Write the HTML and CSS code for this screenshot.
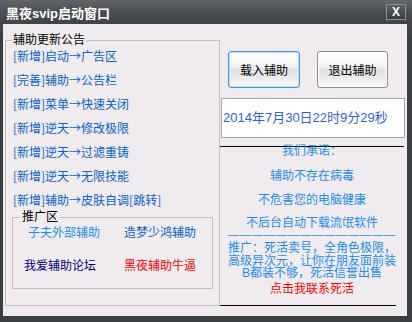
FILE: index.html
```html
<!DOCTYPE html>
<html lang="zh-CN">
<head>
  <meta charset="UTF-8" />
  <title>黑夜svip启动窗口</title>
  <link rel="stylesheet" href="styles.css">
</head>
<body>

  <div class="window">
    <div class="titlebar">
      <span class="title">黑夜svip启动窗口</span>
      <span class="close">X</span>
    </div>

    <div class="content">
      <fieldset class="notice">
        <legend>辅助更新公告</legend>
        <ul class="news">
          <li>[新增]启动→广告区</li>
          <li>[完善]辅助→公告栏</li>
          <li>[新增]菜单→快速关闭</li>
          <li>[新增]逆天→修改极限</li>
          <li>[新增]逆天→过滤重铸</li>
          <li>[新增]逆天→无限技能</li>
          <li>[新增]辅助→皮肤自调[跳转]</li>
        </ul>

        <fieldset class="promo">
          <legend>推广区</legend>
          <div class="links">
            <span class="link light first">子夫外部辅助</span>
            <span class="link">造梦少鸿辅助</span>
            <span class="link navy">我爱辅助论坛</span>
            <span class="link red">黑夜辅助牛逼</span>
          </div>
        </fieldset>
      </fieldset>

      <div class="side">
        <div class="buttons">
          <button class="btn focus">载入辅助</button>
          <button class="btn exit">退出辅助</button>
        </div>

        <div class="clock">2014年7月30日22时9分29秒</div>

        <div class="pledge">
          <p class="head">我们承诺：</p>
          <p class="item">辅助不存在病毒</p>
          <p class="item">不危害您的电脑健康</p>
          <p class="item">不后台自动下载流氓软件</p>
          <p class="dashes">——————————————</p>
          <p class="ad">推广：死活卖号，全角色极限，<br>高级异次元，让你在朋友面前装<br>B都装不够，死活信誉出售</p>
          <p class="contact">点击我联系死活</p>
          <div class="endline"></div>
        </div>
      </div>
    </div>
  </div>

</body>
</html>
```

FILE: styles.css
```css
body {
  margin: 0;
  font-family: "Liberation Sans", "Noto Sans CJK SC", sans-serif;
  font-size: 12px;
}

.window {
  width: 412px;
  height: 322px;
  background: linear-gradient(#55595d, #3a3e42 40px, #3a3e42);
  box-sizing: border-box;
  overflow: hidden;
}

.titlebar {
  height: 24px;
  display: flex;
  align-items: center;
  justify-content: space-between;
  background: linear-gradient(#62666a, #4a4e52 50%, #3f4347);
}

.title {
  padding-left: 6px;
  color: #fff;
  font-weight: bold;
  font-size: 13px;
}

.close {
  width: 18px;
  height: 14px;
  margin-right: 6px;
  border: 1px solid #8e9296;
  background: linear-gradient(#5c6064, #383c40);
  color: #fff;
  font-weight: bold;
  font-size: 12px;
  line-height: 14px;
  text-align: center;
  box-sizing: content-box;
}

.content {
  margin: 0 5px 6px 3px;
  height: 292px;
  background-color: #efebef;
  display: grid;
  grid-template-columns: 215px 187px;
  padding-left: 2px;
  box-sizing: border-box;
}

fieldset {
  margin: 0;
  min-width: 0;
  border: 1px solid #c4c0c4;
}

legend {
  color: #000;
  line-height: 16px;
  padding: 0 1px;
}

.notice {
  margin-top: 8px;
  height: 274px;
  padding: 0 6px 16px 7px;
  box-sizing: border-box;
}

.notice > legend {
  margin-left: -1px;
}

.news {
  list-style: none;
  margin: 0;
  padding: 0;
  display: flex;
  flex-direction: column;
  gap: 8px;
  font-family: "Noto Sans CJK SC", sans-serif;
}

.news li {
  line-height: 16px;
  color: #0862d0;
  white-space: nowrap;
}

.promo {
  margin: 1px 0 0 -1px;
  padding: 0 0 14px 11px;
}

.promo > legend {
  margin-left: -4px;
  padding: 0 2px;
}

.links {
  display: grid;
  grid-template-columns: 100px 1fr;
  row-gap: 17px;
}

.link {
  line-height: 16px;
  color: #0860d0;
  white-space: nowrap;
}

.link.first {
  margin-left: 4px;
}

.light {
  color: #1e8cf8;
}

.navy {
  color: #000080;
}

.red {
  color: #ff0000;
}

.side {
  padding-top: 27px;
}

.buttons {
  display: flex;
}

.btn {
  height: 37px;
  padding: 0;
  border-radius: 3px;
  font-family: inherit;
  font-size: 12px;
  color: #000;
  background: linear-gradient(#fdfdfd, #f3f3f3 42%, #e2e2e2 52%, #ececec 75%, #f7f7f7);
}

.btn.focus {
  width: 72px;
  margin-left: 8px;
  border: 1px solid #3d95f0;
  box-shadow: inset 0 0 0 1px #b9defc;
}

.btn.exit {
  width: 71px;
  margin-left: 17px;
  border: 1px solid #8c8c8c;
  box-shadow: inset 0 0 0 1px #fff;
}

.clock {
  margin: 10px 2px 0 1px;
  height: 40px;
  box-sizing: border-box;
  border: 1px solid #a4a0a4;
  background-color: #fff;
  padding-left: 1px;
  line-height: 38px;
  font-size: 13px;
  color: #2f5fe0;
  white-space: nowrap;
}

.pledge {
  margin: 8px 3px 0 0;
  border-top: 1px solid #000;
  text-align: center;
  color: #1e8cf0;
}

.pledge p {
  margin: 0;
  white-space: nowrap;
}

.pledge .head {
  line-height: 8px;
}

.pledge .item {
  line-height: 16px;
  margin-top: 8px;
}

.pledge .head + .item {
  margin-top: 13px;
}

.pledge .item:nth-child(4) {
  margin-top: 7px;
}

.pledge .dashes {
  margin-top: 1px;
  line-height: 4px;
  font-size: 11px;
  letter-spacing: 1px;
}

.pledge .ad {
  margin-top: 6px;
  line-height: 12.5px;
}

.pledge .contact {
  margin-top: 1.5px;
  line-height: 16px;
  color: #ff0000;
}

.endline {
  margin-top: 8px;
  width: 176px;
  border-top: 1px solid #000;
}
```
